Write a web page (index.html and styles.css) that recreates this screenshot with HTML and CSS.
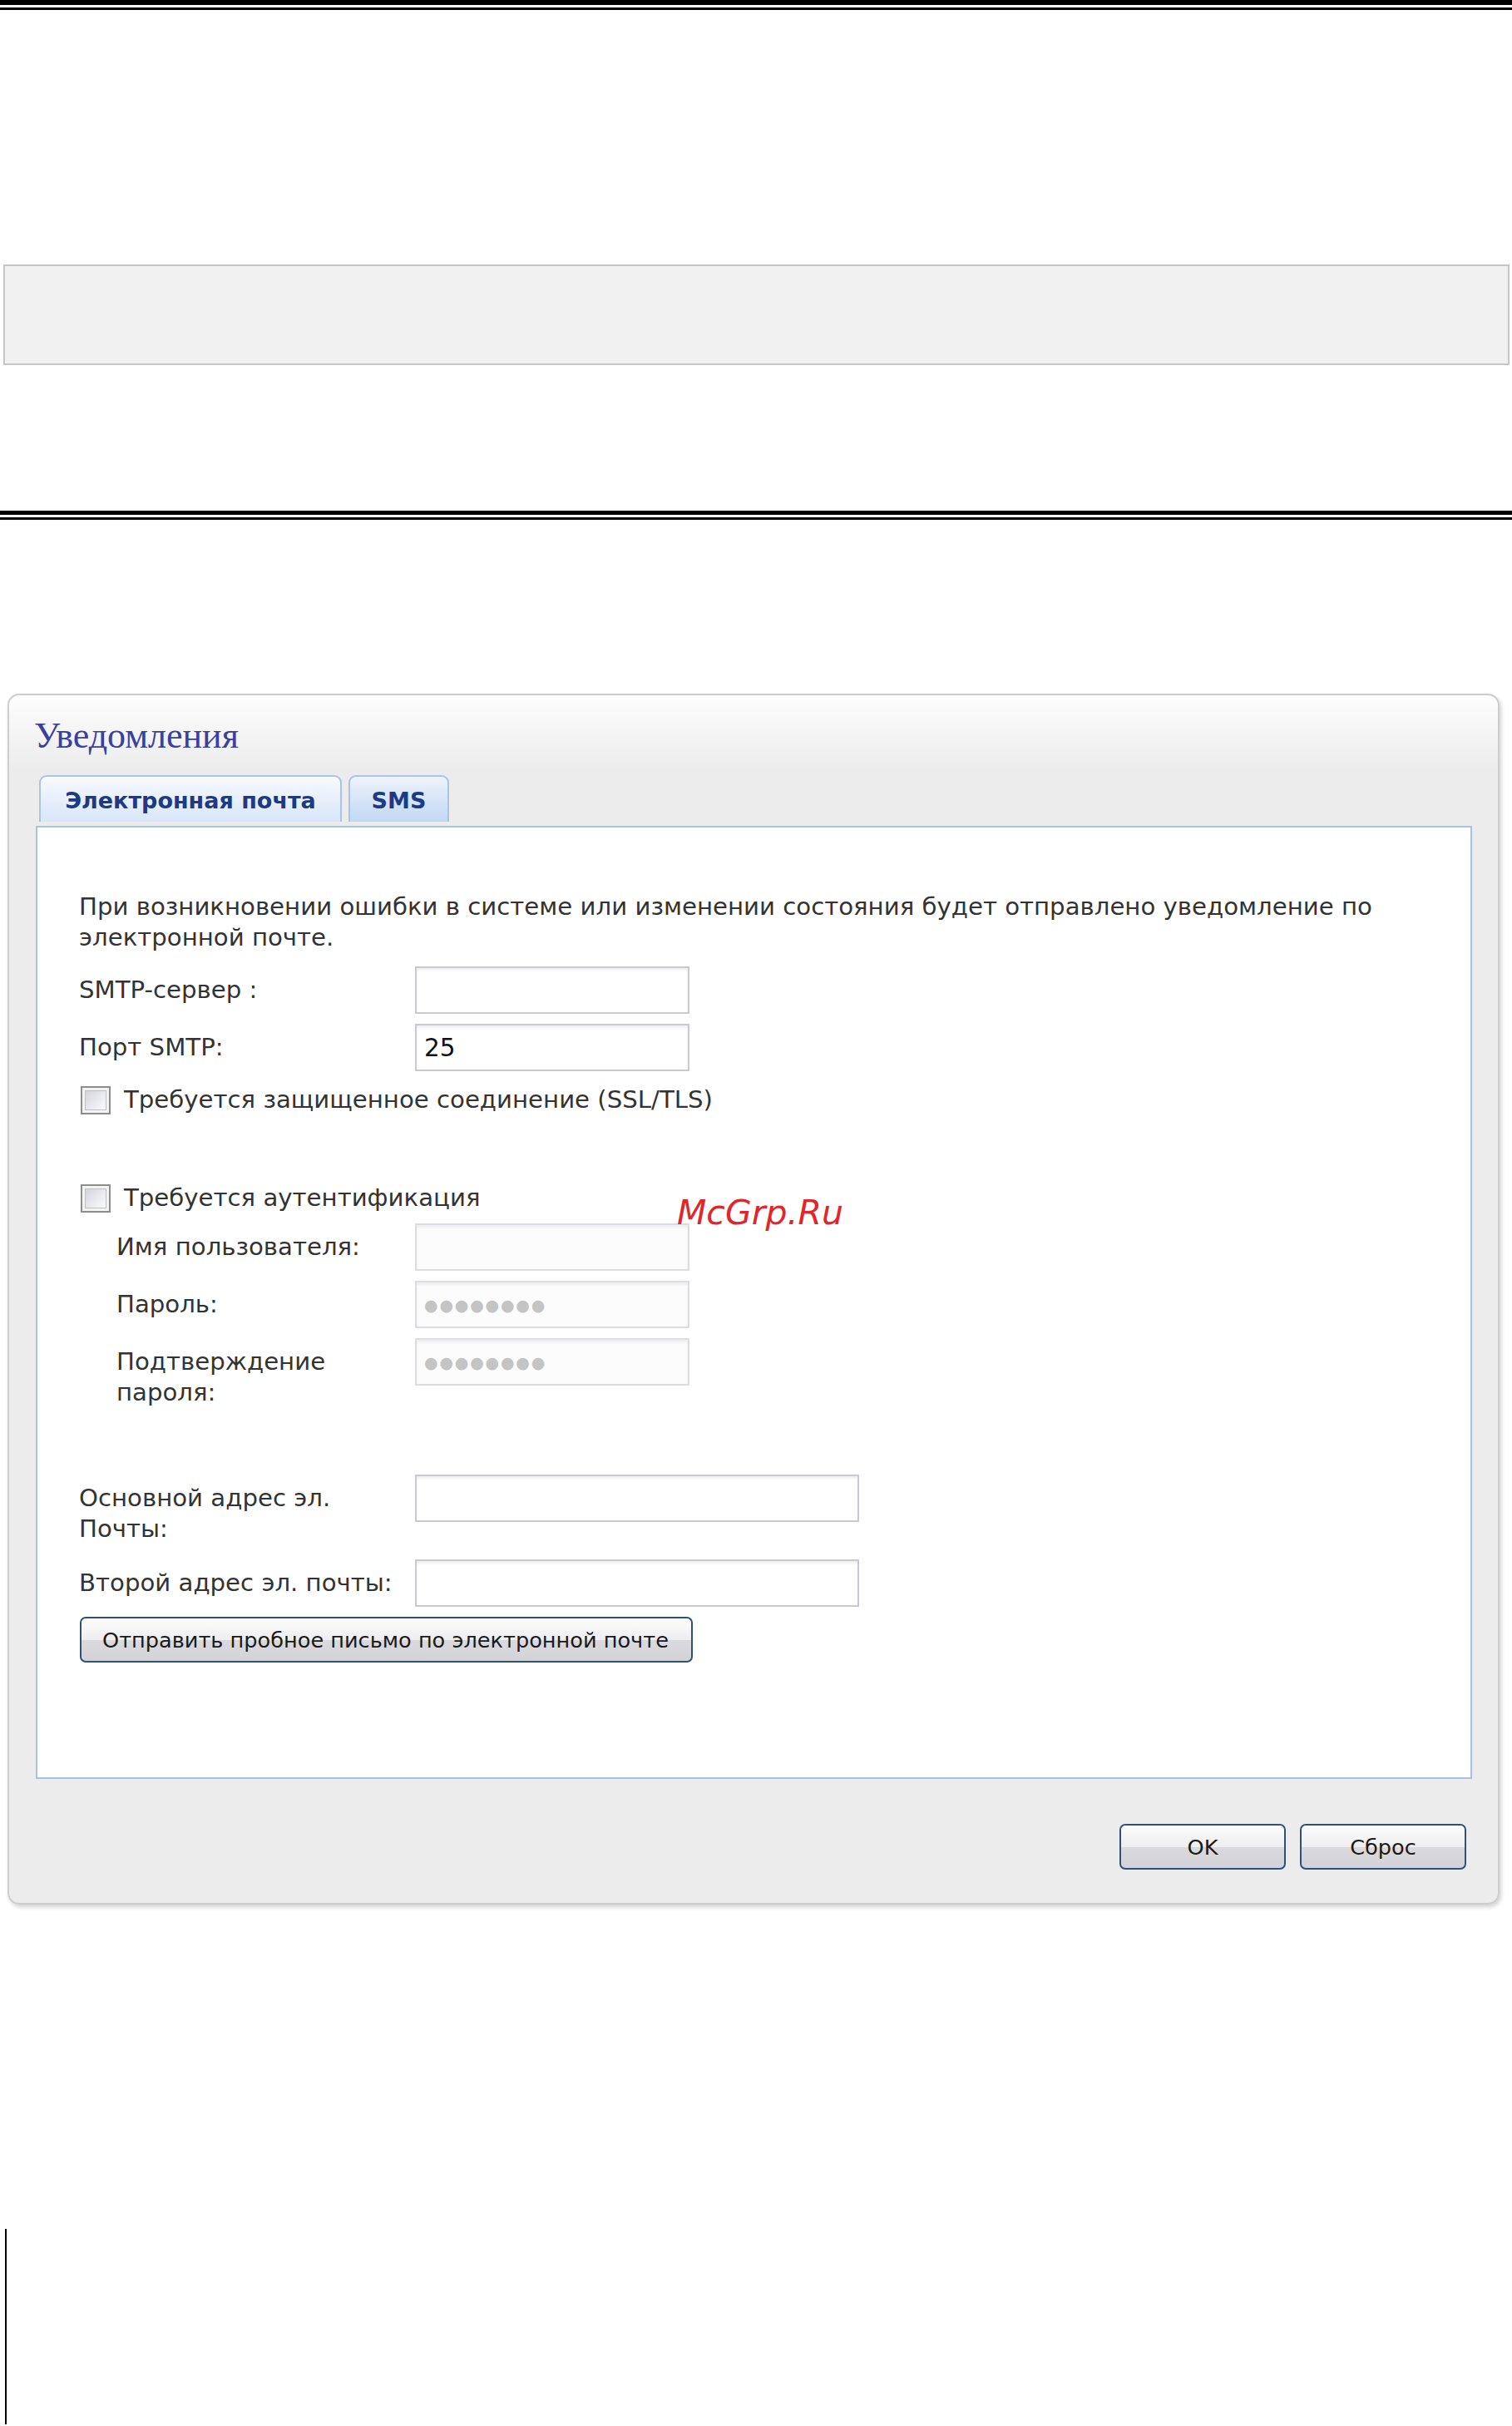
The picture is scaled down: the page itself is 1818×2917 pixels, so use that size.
FILE: index.html
```html
<!DOCTYPE html>
<html lang="ru">
<head>
    <meta charset="UTF-8">
    <title>Уведомления</title>
    <link rel="stylesheet" href="styles.css">
</head>
<body>

<div class="rule rule-top"></div>

<div class="note"></div>

<div class="rule rule-mid"></div>

<div class="panel">
    <div class="title">Уведомления</div>

    <div class="tabs">
        <div class="tab tab-mail">Электронная почта</div>
        <div class="tab tab-sms">SMS</div>
    </div>

    <div class="content">
        <p class="intro">При возникновении ошибки в системе или изменении состояния будет отправлено уведомление по электронной почте.</p>

        <div class="row row-smtp">
            <div class="lbl">SMTP-сервер :</div>
            <input type="text" class="field" value="">
        </div>
        <div class="row">
            <div class="lbl">Порт SMTP:</div>
            <input type="text" class="field" value="25">
        </div>
        <div class="check row-ssl">
            <span class="chk"></span>
            <span>Требуется защищенное соединение (SSL/TLS)</span>
        </div>

        <div class="check row-auth">
            <span class="chk"></span>
            <span>Требуется аутентификация</span>
        </div>
        <div class="row">
            <div class="lbl sub">Имя пользователя:</div>
            <input type="text" class="field off" value="" disabled>
        </div>
        <div class="row">
            <div class="lbl sub">Пароль:</div>
            <input type="text" class="field off dots" value="●●●●●●●●" disabled>
        </div>
        <div class="row">
            <div class="lbl sub">Подтверждение<br>пароля:</div>
            <input type="text" class="field off dots" value="●●●●●●●●" disabled>
        </div>

        <div class="row row-mail1">
            <div class="lbl">Основной адрес эл.<br>Почты:</div>
            <input type="text" class="field wide" value="">
        </div>
        <div class="row row-mail2">
            <div class="lbl">Второй адрес эл. почты:</div>
            <input type="text" class="field wide" value="">
        </div>
        <button class="btn btn-test">Отправить пробное письмо по электронной почте</button>
    </div>

    <div class="foot">
        <button class="btn btn-small">OK</button>
        <button class="btn btn-small">Сброс</button>
    </div>
</div>

<div class="mark">McGrp.Ru</div>

<div class="edge"></div>

</body>
</html>
```

FILE: styles.css
```css
*{margin: 0; padding: 0;}
body{
    font-family: "DejaVu Sans", "Noto Sans", sans-serif;
    color: #333;
    background: #fff;
    position: relative;
}
.rule{
    height: 3px;
    border-top: 6px solid #000;
    border-bottom: 3px solid #000;
}
.rule-mid{
    margin-top: 175px;
    border-top-width: 5px;
}
.note{
    margin: 306px 3px 0 4px;
    height: 121px;
    box-sizing: border-box;
    border: 2px solid #c6c6c6;
    background: #f1f1f1;
}
.panel{
    margin: 209px 0 0 9px;
    width: 1794px;
    box-sizing: border-box;
    border: 2px solid #cdcdcd;
    border-radius: 14px;
    padding: 24px 31px 40px 32px;
    background: linear-gradient(#fdfdfd, #ececec 90px, #ececec);
    box-shadow: 2px 3px 5px rgba(0,0,0,0.18);
}
.title{
    font-family: "Liberation Serif", serif;
    font-size: 44px;
    line-height: 50px;
    color: #3a40a0;
    margin-left: -2px;
}
.tabs{
    display: flex;
    gap: 8px;
    margin-top: 22px;
    padding-left: 4px;
}
.tab{
    height: 56px;
    box-sizing: border-box;
    border: 2px solid #a9c4ea;
    border-bottom: none;
    border-radius: 9px 9px 0 0;
    padding-top: 10px;
    line-height: 38px;
    text-align: center;
    font-size: 27px;
    font-weight: bold;
    color: #1d3a85;
}
.tab-mail{
    width: 364px;
    background: linear-gradient(#f7fafe, #e4eefb 60%, #d7e6f9);
}
.tab-sms{
    width: 121px;
    background: linear-gradient(#eef4fc, #d2e2f7 60%, #c3d8f3);
}
.content{
    margin-top: 5px;
    height: 1146px;
    box-sizing: border-box;
    border: 2px solid #a7c1ea;
    background: #fff;
    padding: 77px 40px 0 50px;
    font-size: 29.2px;
}
.intro{
    line-height: 37px;
}
.row{
    display: flex;
    align-items: flex-start;
    margin-top: 12px;
}
.row-smtp{
    margin-top: 16px;
}
.lbl{
    width: 404px;
    flex-shrink: 0;
    padding-top: 10px;
    line-height: 37px;
}
.lbl.sub{
    width: 359px;
    padding-left: 45px;
}
.field{
    width: 330px;
    height: 57px;
    box-sizing: border-box;
    border: 2px solid #c9c9d3;
    box-shadow: inset 0 3px 3px rgba(0,0,0,0.06);
    background: #fff;
    padding: 0 9px;
    font-family: "DejaVu Sans", sans-serif;
    font-size: 29.5px;
    color: #111;
    outline: none;
}
.field.off{
    border-color: #dcdce4;
    background: #fcfcfc;
}
.field.dots{
    font-size: 19px;
    color: #c4c4c4;
    letter-spacing: 1.8px;
}
.field.wide{
    width: 534px;
}
.check{
    display: flex;
    align-items: center;
    line-height: 37px;
    margin-top: 16px;
}
.row-auth{
    margin-top: 81px;
}
.chk{
    width: 36px;
    height: 34px;
    box-sizing: border-box;
    border: 2px solid #8d8d8d;
    padding: 3px;
    margin: 0 16px 0 2px;
    background: #f4f4f4;
}
.chk::after{
    content: "";
    display: block;
    height: 100%;
    box-sizing: border-box;
    border: 1px solid #bfbfbf;
    background: linear-gradient(135deg, #d4d6dd, #fbfbfc);
}
.row-mail1{
    margin-top: 80px;
}
.row-mail2{
    margin-top: 18px;
}
.btn{
    height: 55px;
    box-sizing: border-box;
    border: 2px solid #2d5179;
    border-radius: 7px;
    background: linear-gradient(#fcfcfc, #eeeef0 50%, #dadade 52%, #d2d2d8);
    font-family: "DejaVu Sans", sans-serif;
    font-size: 25.6px;
    color: #1a1a1a;
    cursor: pointer;
}
.btn-test{
    display: block;
    margin: 12px 0 0 1px;
    padding: 0 25px;
    width: 737px;
    text-align: left;
}
.foot{
    display: flex;
    justify-content: flex-end;
    gap: 17px;
    margin-top: 54px;
    padding-right: 7px;
}
.btn-small{
    width: 200px;
}
.mark{
    position: absolute;
    left: 814px;
    top: 1438px;
    font-size: 41px;
    line-height: 41px;
    font-style: italic;
    color: #e0262a;
}
.edge{
    margin: 390px 0 0 6px;
    height: 235px;
    border-left: 2px solid #000;
}
```
